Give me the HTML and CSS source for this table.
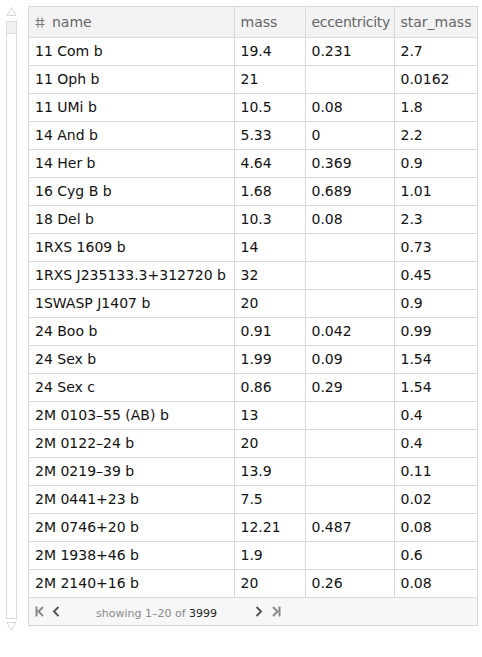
FILE: index.html
```html
<!DOCTYPE html>
<html>
<head>
<meta charset="utf-8">
<link rel="stylesheet" href="styles.css">
</head>
<body>
<div class="page">
  <div class="scroll">
    <svg class="arrow up" width="11" height="9" viewBox="0 0 11 9"><path d="M1 8.5 L5.5 0.5 L10 8.5 Z" fill="none" stroke="#d6d6d6" stroke-width="1"/></svg>
    <div class="track"><div class="thumb"></div></div>
    <svg class="arrow down" width="11" height="9" viewBox="0 0 11 9"><path d="M1 0.5 L5.5 8.5 L10 0.5 Z" fill="none" stroke="#d6d6d6" stroke-width="1"/></svg>
  </div>
  <div class="grid">
    <table class="tbl">
      <colgroup><col class="c1"><col class="c2"><col class="c3"><col class="c4"></colgroup>
      <thead>
        <tr><th><span class="hash"><svg width="10" height="11" viewBox="0 0 10 11"><path d="M3 0.5 V10.5 M7 0.5 V10.5 M0.5 3.5 H9.5 M0.5 7.5 H9.5" stroke="#777" stroke-width="1.1" fill="none"/></svg></span>name</th><th>mass</th><th>eccentricity</th><th>star_mass</th></tr>
      </thead>
      <tbody>
        <tr><td>11 Com b</td><td>19.4</td><td>0.231</td><td>2.7</td></tr>
        <tr><td>11 Oph b</td><td>21</td><td></td><td>0.0162</td></tr>
        <tr><td>11 UMi b</td><td>10.5</td><td>0.08</td><td>1.8</td></tr>
        <tr><td>14 And b</td><td>5.33</td><td>0</td><td>2.2</td></tr>
        <tr><td>14 Her b</td><td>4.64</td><td>0.369</td><td>0.9</td></tr>
        <tr><td>16 Cyg B b</td><td>1.68</td><td>0.689</td><td>1.01</td></tr>
        <tr><td>18 Del b</td><td>10.3</td><td>0.08</td><td>2.3</td></tr>
        <tr><td>1RXS 1609 b</td><td>14</td><td></td><td>0.73</td></tr>
        <tr><td>1RXS J235133.3+312720 b</td><td>32</td><td></td><td>0.45</td></tr>
        <tr><td>1SWASP J1407 b</td><td>20</td><td></td><td>0.9</td></tr>
        <tr><td>24 Boo b</td><td>0.91</td><td>0.042</td><td>0.99</td></tr>
        <tr><td>24 Sex b</td><td>1.99</td><td>0.09</td><td>1.54</td></tr>
        <tr><td>24 Sex c</td><td>0.86</td><td>0.29</td><td>1.54</td></tr>
        <tr><td>2M 0103–55 (AB) b</td><td>13</td><td></td><td>0.4</td></tr>
        <tr><td>2M 0122–24 b</td><td>20</td><td></td><td>0.4</td></tr>
        <tr><td>2M 0219–39 b</td><td>13.9</td><td></td><td>0.11</td></tr>
        <tr><td>2M 0441+23 b</td><td>7.5</td><td></td><td>0.02</td></tr>
        <tr><td>2M 0746+20 b</td><td>12.21</td><td>0.487</td><td>0.08</td></tr>
        <tr><td>2M 1938+46 b</td><td>1.9</td><td></td><td>0.6</td></tr>
        <tr><td>2M 2140+16 b</td><td>20</td><td>0.26</td><td>0.08</td></tr>
      </tbody>
    </table>
    <div class="footer">
      <svg class="ic first" width="9" height="11" viewBox="0 0 9 11"><path d="M1.5 0.5 V10.5 M8 1 L3.5 5.5 L8 10" stroke="#8a8a8a" stroke-width="2" fill="none"/></svg>
      <svg class="ic prev" width="8" height="11" viewBox="0 0 8 11"><path d="M6.5 1 L2 5.5 L6.5 10" stroke="#555" stroke-width="2" fill="none"/></svg>
      <span class="info">showing 1–20 of <b>3999</b></span>
      <svg class="ic next" width="8" height="11" viewBox="0 0 8 11"><path d="M1.5 1 L6 5.5 L1.5 10" stroke="#555" stroke-width="2" fill="none"/></svg>
      <svg class="ic last" width="9" height="11" viewBox="0 0 9 11"><path d="M7.5 0.5 V10.5 M1 1 L5.5 5.5 L1 10" stroke="#8a8a8a" stroke-width="2" fill="none"/></svg>
    </div>
  </div>
</div>
</body>
</html>
```
FILE: styles.css
```css
html, body {
  margin: 0;
  padding: 0;
  background: #fff;
}
.page {
  display: flex;
  align-items: flex-start;
  padding: 6px 0 0 6px;
  font-family: "DejaVu Sans", Verdana, sans-serif;
}
.scroll {
  width: 11px;
  display: flex;
  flex-direction: column;
  align-items: center;
  margin-right: 11px;
}
.scroll .arrow {
  display: block;
}
.scroll .up {
  margin-top: 1px;
  margin-bottom: 5px;
}
.scroll .down {
  margin-top: 3px;
}
.track {
  box-sizing: border-box;
  width: 11px;
  height: 598px;
  border: 1px solid #dcdcdc;
  background: #fff;
}
.thumb {
  height: 11px;
  border-bottom: 1px solid #dcdcdc;
  background: #f0f0f0;
}
.grid {
  width: 450px;
  border: 1px solid #d9d9d9;
  box-sizing: border-box;
}
.tbl {
  border-collapse: collapse;
  table-layout: fixed;
  width: 448px;
}
.c1 { width: 205px; }
.c2 { width: 71px; }
.c3 { width: 89px; }
.c4 { width: 83px; }
.tbl th, .tbl td {
  height: 28px;
  padding: 0 0 0 6px;
  text-align: left;
  font-size: 14px;
  white-space: nowrap;
  overflow: hidden;
  border: 1px solid #d9d9d9;
  box-sizing: border-box;
}
.tbl th {
  height: 30px;
  background: #f3f3f3;
  color: #666;
  font-weight: normal;
  border-top: none;
}
.tbl th:nth-child(3) {
  letter-spacing: -0.3px;
}
.tbl tr > :first-child { border-left: none; }
.tbl tr > :last-child { border-right: none; }
.tbl td {
  color: #111;
}
.hash {
  display: inline-block;
  width: 17px;
  vertical-align: -1px;
}
.hash svg { display: block; }
.footer {
  height: 27px;
  background: #f7f7f7;
  display: flex;
  align-items: center;
  box-sizing: border-box;
  padding-left: 6px;
}
.ic { display: block; }
.prev { margin-left: 8px; }
.info {
  font-size: 11px;
  color: #888;
  margin-left: 36px;
  padding-top: 5px;
  width: 159px;
}
.info b {
  font-weight: normal;
  color: #222;
}
.next { margin-left: 0; }
.last { margin-left: 9px; }
```
